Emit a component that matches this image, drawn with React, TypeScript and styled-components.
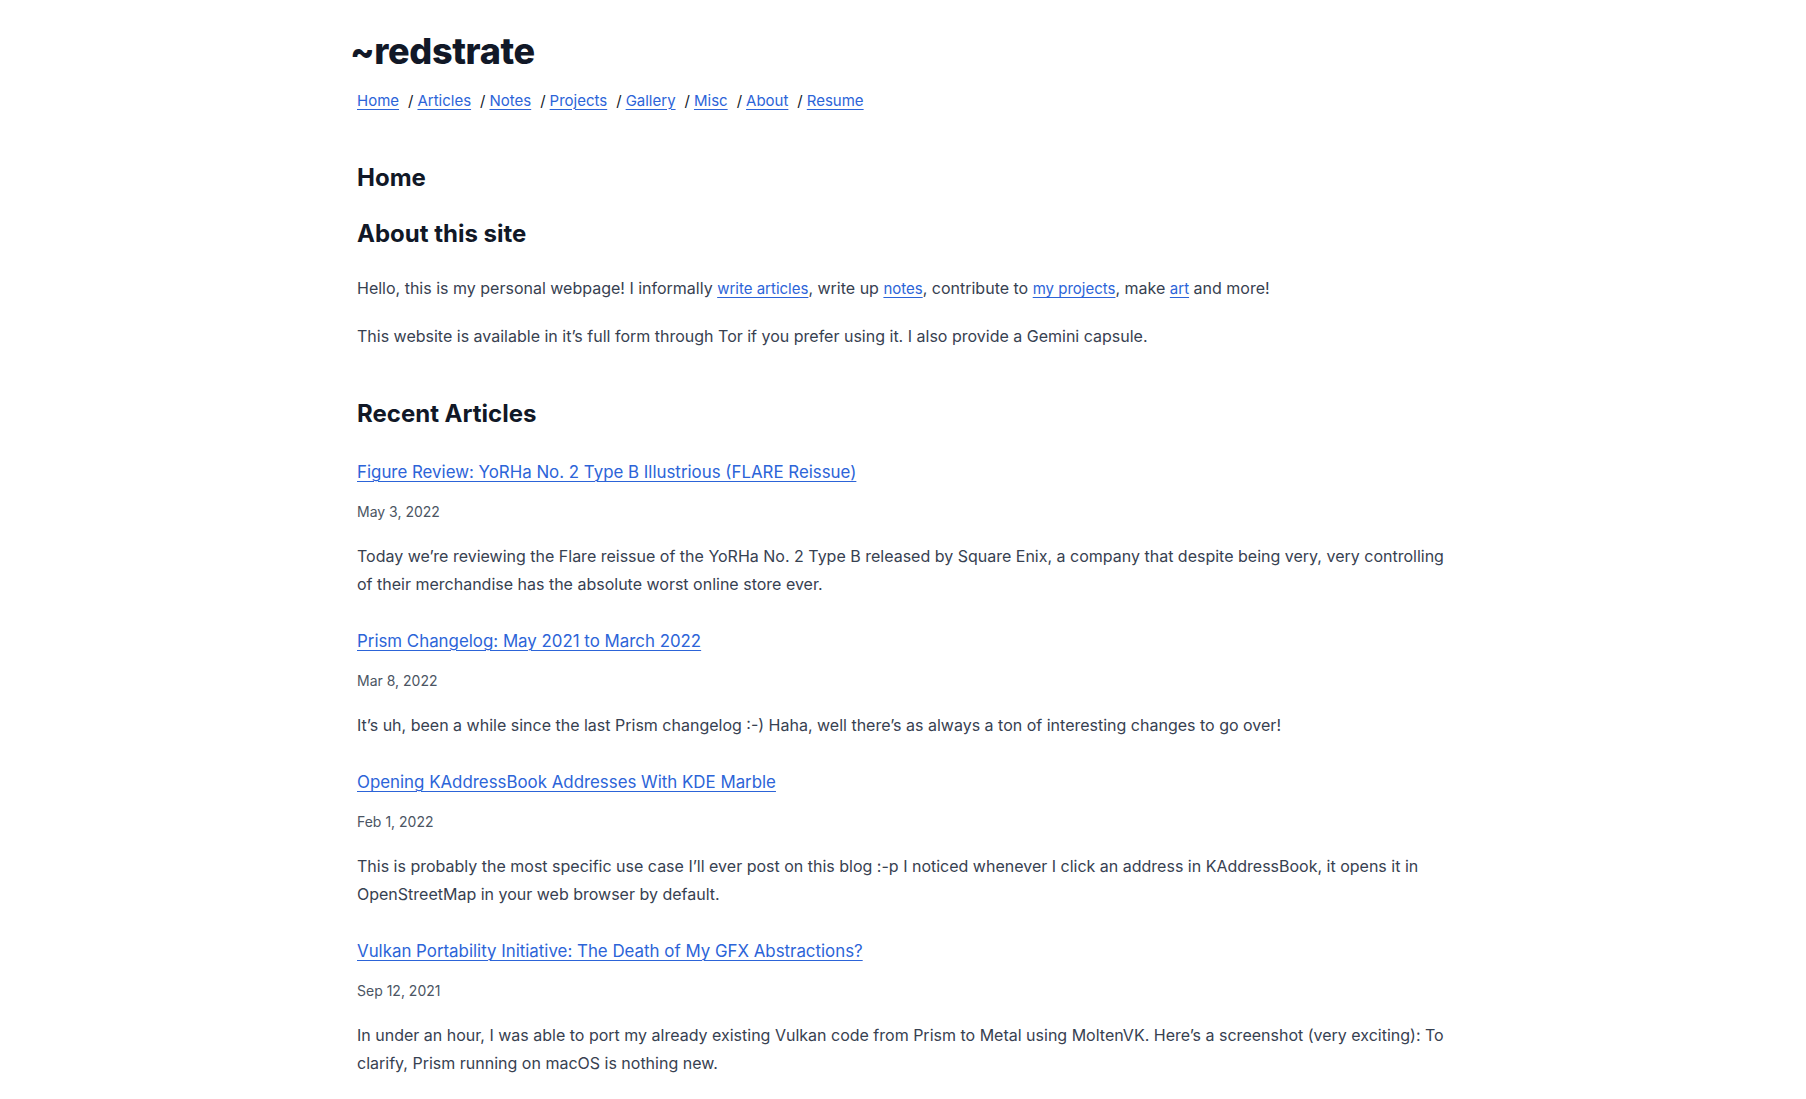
import React from "react";
import styled, { createGlobalStyle } from "styled-components";

const Global = createGlobalStyle`
  html, body {
    margin: 0;
    padding: 0;
    background: #ffffff;
  }
  body {
    font-family: Inter, "Noto Sans", "Liberation Sans", sans-serif;
    font-size: 16px;
    color: #374151;
    -webkit-font-smoothing: antialiased;
  }
  * { box-sizing: border-box; }
`;

const Page = styled.div`
  width: 1092px;
  margin: 0 auto;
  padding: 31px 0 40px;
`;

const Header = styled.header`
  display: flex;
  flex-direction: column;
  gap: 17px;
`;

const SiteTitle = styled.h1`
  margin: 0 0 0 -7px;
  font-size: 36px;
  line-height: 40px;
  font-weight: 800;
  color: #111827;
  letter-spacing: -0.01em;
`;

const Nav = styled.nav`
  display: flex;
  align-items: center;
  height: 24px;
  font-size: 16px;
`;

const NavItem = styled.span`
  display: inline-flex;
  align-items: center;
`;

const Sep = styled.span`
  color: #111827;
  font-size: 15px;
  margin: 0 4px 0 9px;
`;

const Link = styled.a`
  color: #2c64d8;
  font-size: 0.9375em;
  line-height: 1;
  text-decoration: underline;
  text-underline-offset: 3px;
  text-decoration-thickness: 1px;
  cursor: pointer;
`;

const Main = styled.main`
  margin-top: 50px;
`;

const H2 = styled.h2<{ $top?: number }>`
  margin: ${(p) => p.$top ?? 0}px 0 24px;
  font-size: 24px;
  line-height: 32px;
  font-weight: 700;
  color: #111827;
`;

const Para = styled.p`
  margin: 0 0 20px;
  font-size: 16px;
  line-height: 28px;
  color: #374151;
`;

const ArticleList = styled.div`
  display: flex;
  flex-direction: column;
  gap: 29px;
  margin-top: 28px;
`;

const Article = styled.article`
  display: flex;
  flex-direction: column;
`;

const ArticleTitle = styled.div`
  font-size: 18px;
  line-height: 28px;
  margin-bottom: 16px;
`;

const DateLine = styled.div`
  font-size: 14px;
  line-height: 20px;
  color: #4b5563;
  margin-bottom: 20px;
`;

const Excerpt = styled.p`
  margin: 0;
  font-size: 16px;
  line-height: 28px;
  color: #374151;
`;

const navItems = ["Home", "Articles", "Notes", "Projects", "Gallery", "Misc", "About", "Resume"];

const articles = [
  {
    title: "Figure Review: YoRHa No. 2 Type B Illustrious (FLARE Reissue)",
    date: "May 3, 2022",
    excerpt:
      "Today we’re reviewing the Flare reissue of the YoRHa No. 2 Type B released by Square Enix, a company that despite being very, very controlling of their merchandise has the absolute worst online store ever.",
  },
  {
    title: "Prism Changelog: May 2021 to March 2022",
    date: "Mar 8, 2022",
    excerpt:
      "It’s uh, been a while since the last Prism changelog :-) Haha, well there’s as always a ton of interesting changes to go over!",
  },
  {
    title: "Opening KAddressBook Addresses With KDE Marble",
    date: "Feb 1, 2022",
    excerpt:
      "This is probably the most specific use case I’ll ever post on this blog :-p I noticed whenever I click an address in KAddressBook, it opens it in OpenStreetMap in your web browser by default.",
  },
  {
    title: "Vulkan Portability Initiative: The Death of My GFX Abstractions?",
    date: "Sep 12, 2021",
    excerpt:
      "In under an hour, I was able to port my already existing Vulkan code from Prism to Metal using MoltenVK. Here’s a screenshot (very exciting): To clarify, Prism running on macOS is nothing new.",
  },
];

export default function App() {
  return (
    <>
      <Global />
      <Page>
        <Header>
          <SiteTitle>~redstrate</SiteTitle>
          <Nav>
            {navItems.map((item, i) => (
              <NavItem key={item}>
                {i > 0 && <Sep>/</Sep>}
                <Link>{item}</Link>
              </NavItem>
            ))}
          </Nav>
        </Header>
        <Main>
          <H2>Home</H2>
          <H2>About this site</H2>
          <Para>
            Hello, this is my personal webpage! I informally <Link>write articles</Link>, write up{" "}
            <Link>notes</Link>, contribute to <Link>my projects</Link>, make <Link>art</Link> and more!
          </Para>
          <Para>
            This website is available in it’s full form through Tor if you prefer using it. I also provide a
            Gemini capsule.
          </Para>
          <H2 $top={48}>Recent Articles</H2>
          <ArticleList>
            {articles.map((a) => (
              <Article key={a.title}>
                <ArticleTitle>
                  <Link>{a.title}</Link>
                </ArticleTitle>
                <DateLine>{a.date}</DateLine>
                <Excerpt>{a.excerpt}</Excerpt>
              </Article>
            ))}
          </ArticleList>
        </Main>
      </Page>
    </>
  );
}
